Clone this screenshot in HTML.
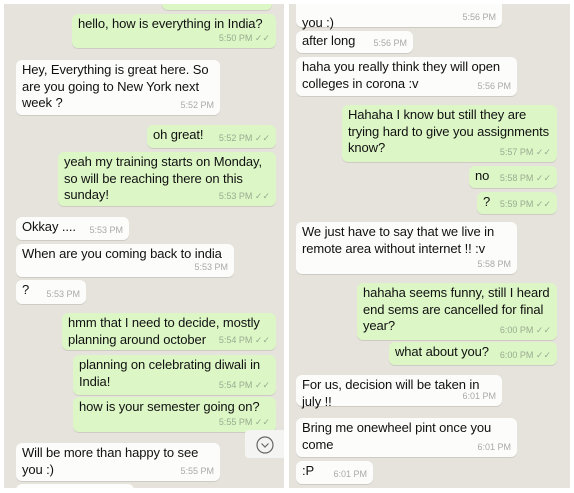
<!DOCTYPE html>
<html><head><style>
body{margin:0;width:574px;height:493px;background:#fff;position:relative;overflow:hidden;font-family:"Liberation Sans",sans-serif;}
.p{position:absolute;top:4px;height:484px;background:#e6e2dc;overflow:hidden}
.b{position:absolute;border-radius:6px;font-size:13px;line-height:16.5px;color:#111;padding:2px 6px 0 6px;box-sizing:border-box;box-shadow:0 1px 0 rgba(0,0,0,0.1);white-space:nowrap;letter-spacing:-0.1px}
.w{background:#fcfcfa}
.g{background:#dcf6c6}
.t{position:absolute;right:6px;bottom:2px;font-size:9px;color:#a9aaa6;white-space:nowrap;letter-spacing:0}
.g .t{color:#9aab90}
</style></head><body>
<div class="p" style="left:4px;width:280px">
<div class="b g" style="left:158px;top:-6px;width:110px;height:12px"><span class="t">5:41 PM ✓✓</span></div>
<div class="b g" style="left:68px;top:10px;width:204px;height:34px">hello, how is everything in India?<span class="t">5:50 PM ✓✓</span></div>
<div class="b w" style="left:12px;top:56px;width:204px;height:55px">Hey, Everything is great here. So<br>are you going to New York next<br>week ?<span class="t">5:52 PM</span></div>
<div class="b g" style="left:143px;top:121px;width:129px;height:23px">oh great!<span class="t">5:52 PM ✓✓</span></div>
<div class="b g" style="left:54px;top:148px;width:218px;height:54px">yeah my training starts on Monday,<br>so will be reaching there on this<br>sunday!<span class="t">5:53 PM ✓✓</span></div>
<div class="b w" style="left:12px;top:213px;width:113px;height:23px">Okkay ....<span class="t">5:53 PM</span></div>
<div class="b w" style="left:12px;top:240px;width:218px;height:33px">When are you coming back to india<span class="t">5:53 PM</span></div>
<div class="b w" style="left:12px;top:276px;width:70px;height:24px">?<span class="t">5:53 PM</span></div>
<div class="b g" style="left:58px;top:309px;width:214px;height:37px">hmm that I need to decide, mostly<br>planning around october<span class="t">5:54 PM ✓✓</span></div>
<div class="b g" style="left:69px;top:351px;width:203px;height:40px">planning on celebrating diwali in<br>India!<span class="t">5:54 PM ✓✓</span></div>
<div class="b g" style="left:69px;top:393px;width:203px;height:35px">how is your semester going on?<span class="t">5:55 PM ✓✓</span></div>
<div style="position:absolute;left:241px;top:426px;width:40px;height:28px;background:#f4f4f2;border-radius:4px 0 0 4px"><svg width="40" height="28"><circle cx="20" cy="15" r="8" fill="none" stroke="#666" stroke-width="1.2"/><path d="M16.5 13.5l3.5 3.5 3.5-3.5" fill="none" stroke="#666" stroke-width="1.2"/></svg></div>
<div class="b w" style="left:12px;top:439px;width:204px;height:38px">Will be more than happy to see<br>you :)<span class="t">5:55 PM</span></div>
<div class="b w" style="left:12px;top:480px;width:118px;height:20px"></div>
</div>
<div class="p" style="left:289px;width:281px">
<div class="b w" style="left:7px;top:-8px;width:206px;height:31px"><br>you :)<span class="t">5:56 PM</span></div>
<div class="b w" style="left:7px;top:27px;width:117px;height:22px">after long<span class="t">5:56 PM</span></div>
<div class="b w" style="left:7px;top:53px;width:221px;height:39px">haha you really think they will open<br>colleges in corona :v<span class="t">5:56 PM</span></div>
<div class="b g" style="left:53px;top:101px;width:215px;height:57px">Hahaha I know but still they are<br>trying hard to give you assignments<br>know?<span class="t">5:57 PM ✓✓</span></div>
<div class="b g" style="left:180px;top:162px;width:88px;height:22px">no<span class="t">5:58 PM ✓✓</span></div>
<div class="b g" style="left:188px;top:188px;width:80px;height:22px">?<span class="t">5:59 PM ✓✓</span></div>
<div class="b w" style="left:7px;top:218px;width:221px;height:52px">We just have to say that we live in<br>remote area without internet !! :v<span class="t">5:58 PM</span></div>
<div class="b g" style="left:68px;top:279px;width:200px;height:57px">hahaha seems funny, still I heard<br>end sems are cancelled for final<br>year?<span class="t">6:00 PM ✓✓</span></div>
<div class="b g" style="left:100px;top:338px;width:168px;height:23px">what about you?<span class="t">6:00 PM ✓✓</span></div>
<div class="b w" style="left:7px;top:371px;width:206px;height:31px">For us, decision will be taken in<br>july !!<span class="t">6:01 PM</span></div>
<div class="b w" style="left:7px;top:414px;width:221px;height:39px">Bring me onewheel pint once you<br>come<span class="t">6:01 PM</span></div>
<div class="b w" style="left:7px;top:457px;width:77px;height:23px">:P<span class="t">6:01 PM</span></div>
</div>
</body></html>
